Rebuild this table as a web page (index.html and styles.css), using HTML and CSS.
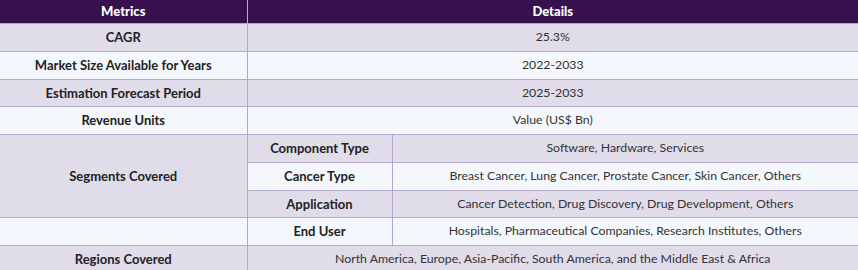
FILE: index.html
```html
<!DOCTYPE html>
<html lang="en">
<head>
<meta charset="utf-8">
<title>Metrics</title>
<link rel="stylesheet" href="styles.css">
</head>
<body>
<table class="report">
  <colgroup>
    <col class="c1">
    <col class="c2">
    <col class="c3">
  </colgroup>
  <thead>
    <tr><th>Metrics</th><th colspan="2">Details</th></tr>
  </thead>
  <tbody>
    <tr class="odd"><td class="label">CAGR</td><td colspan="2">25.3%</td></tr>
    <tr class="even"><td class="label">Market Size Available for Years</td><td colspan="2">2022-2033</td></tr>
    <tr class="odd"><td class="label">Estimation Forecast Period</td><td colspan="2">2025-2033</td></tr>
    <tr class="even"><td class="label">Revenue Units</td><td colspan="2">Value (US$ Bn)</td></tr>
    <tr class="odd"><td class="label" rowspan="3">Segments Covered</td><td class="label">Component Type</td><td>Software, Hardware, Services</td></tr>
    <tr class="even"><td class="label">Cancer Type</td><td>Breast Cancer, Lung Cancer, Prostate Cancer, Skin Cancer, Others</td></tr>
    <tr class="odd"><td class="label">Application</td><td>Cancer Detection, Drug Discovery, Drug Development, Others</td></tr>
    <tr class="even"><td class="label"></td><td class="label">End User</td><td>Hospitals, Pharmaceutical Companies, Research Institutes, Others</td></tr>
    <tr class="odd"><td class="label">Regions Covered</td><td colspan="2">North America, Europe, Asia-Pacific, South America, and the Middle East &amp; Africa</td></tr>
  </tbody>
</table>
</body>
</html>
```

FILE: styles.css
```css
html, body {
  margin: 0;
  padding: 0;
  background: #ffffff;
}
.report {
  width: 858px;
  border-collapse: collapse;
  table-layout: fixed;
  font-family: Lato, "Noto Sans", sans-serif;
  font-size: 12.3px;
  color: #333333;
}
.c1 { width: 247px; }
.c2 { width: 145px; }
.c3 { width: 466px; }
.report th {
  background: #36114d;
  color: #ffffff;
  font-weight: 900;
  font-size: 13px;
  height: 23px;
  padding: 0;
  line-height: 23px;
  text-align: center;
  border-left: 1px solid #b9aec8;
  border-bottom: 1px solid #b3a8cc;
}
.report th:first-child { border-left: none; }
.report td {
  text-align: center;
  padding: 5px 4px;
  line-height: 16.75px;
  border: 1px solid #b3a8cc;
}
.report td:first-child { border-left: none; }
.report td:last-child { border-right: none; }
.report tr td[rowspan] { border-right: 1px solid #b3a8cc; }
.odd td { background: #e0dcea; }
.even td { background: #f4f8fc; }
.report td.label {
  font-weight: 700;
  font-size: 13px;
  color: #222222;
}
```
